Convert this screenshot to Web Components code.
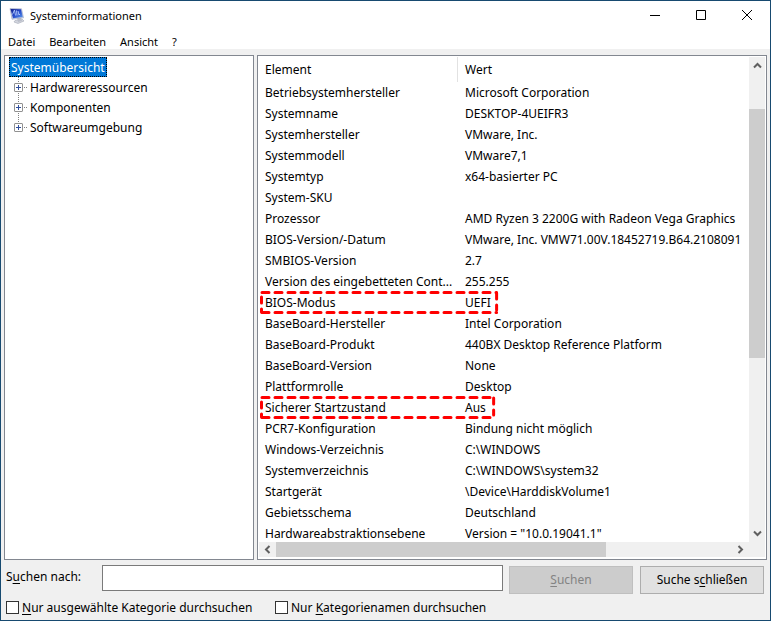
<!DOCTYPE html>
<html lang="de">
<head>
<meta charset="utf-8">
<title>Systeminformationen</title>
<style>
html, body { margin: 0; height: 100%; }
body { font: 12px/20px "Noto Sans", "Open Sans", sans-serif; color: #000; background: #f0f0f0; }
</style>
</head>
<body>
<info-window></info-window>
<script>
class Base extends HTMLElement {
  connectedCallback() {
    if (this.shadowRoot) return;
    this.attachShadow({ mode: 'open' }).innerHTML =
      `<style>*{box-sizing:border-box}button,input{font:inherit;color:inherit}${this.css()}</style>${this.html()}`;
  }
}

class TitleBar extends Base {
  css() { return `
    :host { display: flex; align-items: center; height: 29px; padding-left: 8px; background: #fff; }
    h1 { flex: 1; margin: 0 0 0 5px; font-size: 11px; font-weight: 400; line-height: 20px; }
    .logo { width: 16px; height: 16px; }
    button { width: 46px; height: 29px; padding: 0; border: 0; background: none; display: grid; place-items: center; }
    button svg { width: 12px; height: 11px; }
    path { fill: none; stroke: #000; }`; }
  html() { return `
    <svg class="logo" viewBox="0 0 16 16" aria-hidden="true">
      <defs><linearGradient id="g" x1="0" y1="0" x2="1" y2="1"><stop offset="0" stop-color="#10208c"/><stop offset=".5" stop-color="#2448c8"/><stop offset="1" stop-color="#5f9cf0"/></linearGradient></defs>
      <path d="M6 12.500l7-1.500 2 2-6 2.500-4-1.500z" style="fill:#d3d6df;stroke:#a3a8b5;stroke-width:.6"/>
      <path d="M8 10h4l1 3-4 1z" style="fill:#b9bdc9;stroke:none"/>
      <path d="M1 .500l11.500.3 2 9-11.500 1.500z" style="fill:#c7cee2;stroke:#9ba6c4;stroke-width:.6"/>
      <path d="M1.500 1l10.500.2 1.700 7.800-9.700 1.200z" style="fill:url(#g);stroke:none"/>
      <path d="M3.500 6.500l2-4.500 1 5.500M7.500 2.500l.5 5M9 3l1 4 1-1" style="stroke:#b3ccff;stroke-width:.9"/>
    </svg>
    <h1><slot></slot></h1>
    <button aria-label="Minimieren"><svg viewBox="0 0 12 11"><path d="M1 5.500h10"/></svg></button>
    <button aria-label="Maximieren"><svg viewBox="0 0 12 11"><path d="M1.500.500h9v9h-9z"/></svg></button>
    <button aria-label="Schließen"><svg viewBox="0 0 12 11"><path d="M1 0l10 10M11 0l-10 10"/></svg></button>`; }
}

class MenuBar extends Base {
  css() { return `
    :host { display: flex; gap: 14px; height: 19px; padding-left: 7px; background: #fff; }
    button { padding: 2px 0 0; border: 0; background: none; font-size: 11px; line-height: 20px; height: 20px; }`; }
  html() { return ['Datei', 'Bearbeiten', 'Ansicht', '?'].map(t => `<button>${t}</button>`).join(''); }
}

class CategoryTree extends Base {
  css() { return `
    :host { display: block; background: #fff; border: 1px solid #828790; padding: 1px 4px; overflow: hidden; }
    ul { list-style: none; margin: 0; padding: 0; }
    .root { display: block; width: fit-content; height: 20px; line-height: 22px; padding: 0 2px; background: #0078d7; color: #fff; outline: 1px dotted #000; outline-offset: -1px; }
    .kids { padding-left: 5px; background: linear-gradient(#fff, #fff) 0 100% / 100% 10px no-repeat, repeating-linear-gradient(#808080 0 1px, #fff 1px 2px) 9px 0 / 1px 100% no-repeat; }
    .kids li { display: flex; align-items: center; height: 20px; }
    .kids span { padding-top: 2px; }
    button { width: 9px; height: 9px; padding: 0; border: 1px solid #919191; background: #fff; display: grid; place-items: center; border-radius: 1px; }
    svg { width: 5px; height: 5px; display: block; }
    i { width: 3px; border-top: 1px dotted #808080; margin: 0 3px 0 1px; }`; }
  html() {
    const kids = ['Hardwareressourcen', 'Komponenten', 'Softwareumgebung'].map(t =>
      `<li role="treeitem"><button aria-label="${t} erweitern"><svg viewBox="0 0 5 5"><path d="M0 2.500h5M2.500 0v5" stroke="#304e9c"/></svg></button><i></i><span>${t}</span></li>`).join('');
    return `<ul role="tree"><li role="treeitem"><span class="root">Systemübersicht</span><ul class="kids" role="group">${kids}</ul></li></ul>`;
  }
}

class ScrollStrip extends Base {
  css() { return `
    :host { display: flex; background: #f0f0f0; }
    :host([vertical]) { flex-direction: column; }
    button { flex: 0 0 17px; padding: 0; border: 0; background: none; display: grid; place-items: center; }
    svg { width: 9px; height: 9px; }
    path { fill: none; stroke: #606060; stroke-width: 2; }
    .before { flex: var(--before) 0 0; } .thumb { flex: var(--thumb) 0 0; background: #cdcdcd; } .after { flex: var(--after) 0 0; }`; }
  html() {
    const v = this.hasAttribute('vertical');
    const [a, b] = v ? ['M1 6.500l3.500-3.500 3.500 3.500', 'M1 2.500l3.500 3.500 3.500-3.500'] : ['M6.500 1l-3.500 3.500 3.500 3.500', 'M2.500 1l3.500 3.500-3.500 3.500'];
    const btn = (d, l) => `<button aria-label="${l}"><svg viewBox="0 0 9 9"><path d="${d}"/></svg></button>`;
    return btn(a, v ? 'Nach oben' : 'Nach links') + '<div class="before"></div><div class="thumb"></div><div class="after"></div>' + btn(b, v ? 'Nach unten' : 'Nach rechts');
  }
}

class DashFrame extends Base {
  css() { return `
    :host { position: absolute; left: 2px; top: -1px; width: var(--w, 239px); height: 23px; pointer-events: none; }
    svg { display: block; width: 100%; height: 100%; overflow: visible; }
    line { stroke: #f00; stroke-width: 3; stroke-linecap: round; }
    .h { stroke-dasharray: 7 6; } .v { stroke-dasharray: 6 6; }`; }
  html() { return `<svg aria-hidden="true">
    <line class="h" x1="2" y1="1.500" x2="99%" y2="1.500"/><line class="h" x1="2" y1="21.500" x2="99%" y2="21.500"/>
    <line class="v" x1="1.500" y1="6" x2="1.500" y2="21"/><line class="v" x1="99%" y1="2" x2="99%" y2="19"/></svg>`; }
}

const ROWS = [
  ['Betriebsystemhersteller', 'Microsoft Corporation'],
  ['Systemname', 'DESKTOP-4UEIFR3'],
  ['Systemhersteller', 'VMware, Inc.'],
  ['Systemmodell', 'VMware7,1'],
  ['Systemtyp', 'x64-basierter PC'],
  ['System-SKU', ''],
  ['Prozessor', 'AMD Ryzen 3 2200G with Radeon Vega Graphics'],
  ['BIOS-Version/-Datum', 'VMware, Inc. VMW71.00V.18452719.B64.2108091'],
  ['SMBIOS-Version', '2.7'],
  ['Version des eingebetteten Cont...', '255.255'],
  ['BIOS-Modus', 'UEFI', 239],
  ['BaseBoard-Hersteller', 'Intel Corporation'],
  ['BaseBoard-Produkt', '440BX Desktop Reference Platform'],
  ['BaseBoard-Version', 'None'],
  ['Plattformrolle', 'Desktop'],
  ['Sicherer Startzustand', 'Aus', 236],
  ['PCR7-Konfiguration', 'Bindung nicht möglich'],
  ['Windows-Verzeichnis', 'C:\\WINDOWS'],
  ['Systemverzeichnis', 'C:\\WINDOWS\\system32'],
  ['Startgerät', '\\Device\\HarddiskVolume1'],
  ['Gebietsschema', 'Deutschland'],
  ['Hardwareabstraktionsebene', 'Version = "10.0.19041.1"']
];

class DetailList extends Base {
  css() { return `
    :host { display: grid; grid-template: minmax(0, 1fr) 15px / minmax(0, 1fr) 16px; background: #fff; border: 1px solid #828790; padding: 1px 1px 2px 0; }
    .view { overflow: hidden; }
    table { width: 100%; table-layout: fixed; border-collapse: collapse; }
    col:first-child { width: 200px; }
    th, td { padding: 0 0 0 7px; text-align: left; font-weight: 400; white-space: nowrap; overflow: hidden; }
    th { height: 25px; }
    th:first-child { background: linear-gradient(#e2e2e2, #e2e2e2) 100% 0 / 1px 100% no-repeat; }
    tr { position: relative; }
    td { height: 21px; line-height: 21px; }
    scroll-strip[vertical] { --before: 35; --thumb: 249; --after: 167; }
    .hs { --before: 0; --thumb: 330; --after: 126; margin-left: 1px; }
    .corner { background: #f0f0f0; }`; }
  html() {
    const body = ROWS.map(([k, v, w]) => `<tr><td>${k}${w ? `<dash-frame style="--w:${w}px"></dash-frame>` : ''}</td><td>${v}</td></tr>`).join('');
    return `<div class="view"><table><colgroup><col><col></colgroup><thead><tr><th scope="col">Element</th><th scope="col">Wert</th></tr></thead><tbody>${body}</tbody></table></div>
      <scroll-strip vertical></scroll-strip><scroll-strip class="hs"></scroll-strip><div class="corner"></div>`;
  }
}

class SearchPanel extends Base {
  css() { return `
    :host { display: block; padding: 5px 6px 3px 5px; }
    form { display: flex; align-items: flex-start; height: 29px; }
    form label { flex: 0 0 96px; line-height: 24px; }
    input[type=text] { flex: 1; min-width: 0; height: 26px; border: 1px solid #7a7a7a; background: #fff; padding: 0 4px; margin: 0; border-radius: 0; }
    button { flex: 0 0 124px; height: 28px; margin: 1px 0 0 6px; padding: 0; border: 1px solid #adadad; background: #e1e1e1; }
    button:disabled { color: #838383; background: #ccc; border-color: #bfbfbf; }
    button + button { margin-left: 7px; }
    u { text-underline-offset: 2px; text-decoration-thickness: 1px; text-decoration-skip-ink: none; }
    .options { display: flex; padding-top: 3px; }
    .options label { display: flex; align-items: center; height: 20px; white-space: nowrap; }
    .options label:first-child { flex: 0 0 269px; }
    .options span { padding-top: 2px; }
    input[type=checkbox] { appearance: none; width: 13px; height: 13px; border: 1px solid #333; background: #fff; margin: 0 3px 0 0; }`; }
  html() { return `
    <form><label for="q">S<u>u</u>chen nach:</label><input id="q" type="text">
      <button type="button" disabled><u>S</u>uchen</button><button type="button">Suche s<u>c</u>hließen</button></form>
    <div class="options"><label><input type="checkbox"><span><u>N</u>ur ausgewählte Kategorie durchsuchen</span></label>
      <label><input type="checkbox"><span>Nur <u>K</u>ategorienamen durchsuchen</span></label></div>`; }
}

class InfoWindow extends Base {
  css() { return `
    :host { display: flex; flex-direction: column; box-sizing: border-box; height: 100vh; border: 1px solid #174a70; background: #f0f0f0; }
    main { flex: 1; min-height: 0; display: grid; grid-template: minmax(0, 1fr) / 250px minmax(0, 1fr); gap: 3px; padding: 6px 3px 0; }`; }
  html() { return `<title-bar>Systeminformationen</title-bar><menu-bar></menu-bar>
    <main><category-tree></category-tree><detail-list></detail-list></main><search-panel></search-panel>`; }
}

customElements.define('title-bar', TitleBar);
customElements.define('menu-bar', MenuBar);
customElements.define('category-tree', CategoryTree);
customElements.define('scroll-strip', ScrollStrip);
customElements.define('dash-frame', DashFrame);
customElements.define('detail-list', DetailList);
customElements.define('search-panel', SearchPanel);
customElements.define('info-window', InfoWindow);
</script>
</body>
</html>
